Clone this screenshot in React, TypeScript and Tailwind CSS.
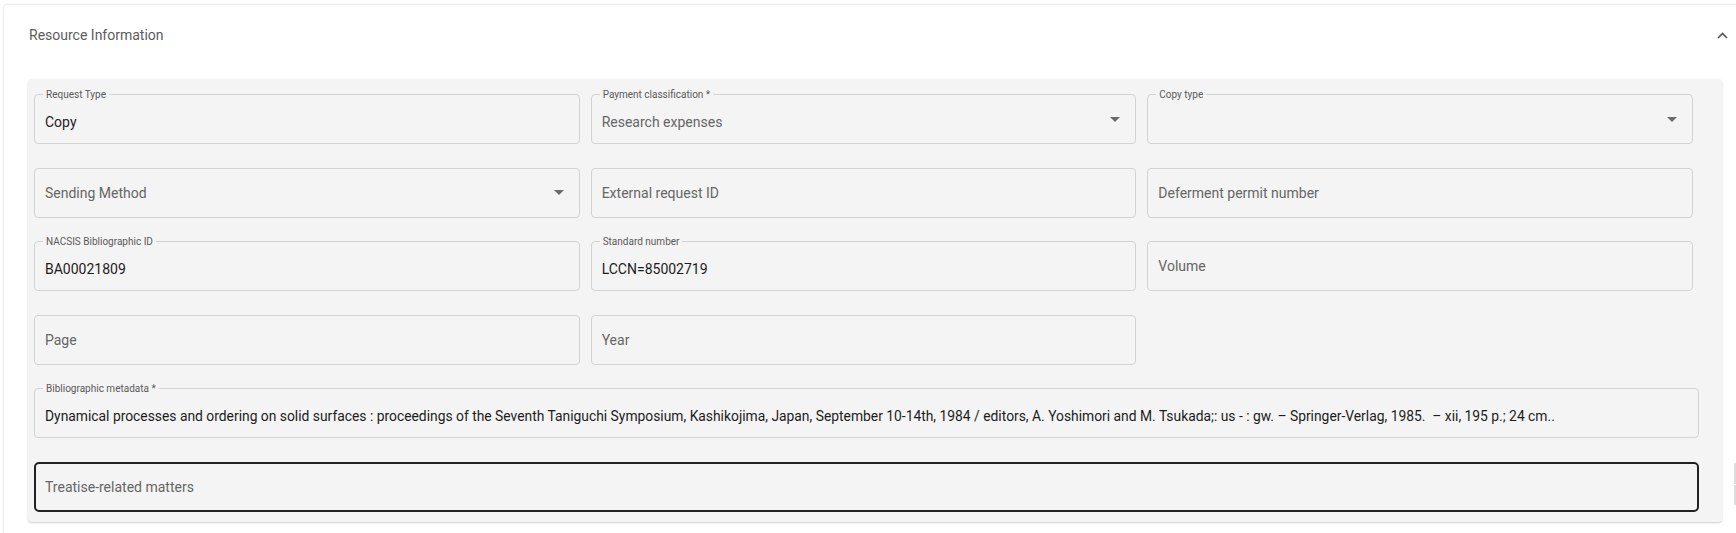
import type { ReactNode } from 'react'

type FieldProps = {
  label?: string
  value?: string
  placeholder?: string
  select?: boolean
  focused?: boolean
  muted?: boolean
  textClass?: string
}

function DropArrow() {
  return (
    <svg width="10" height="5" viewBox="0 0 10 5" className="shrink-0">
      <path d="M0 0h10L5 5z" fill="#6b6b6b" />
    </svg>
  )
}

function Field({ label, value, placeholder, select, focused, muted, textClass }: FieldProps) {
  const border = focused
    ? 'border-2 border-[#222] rounded-[5px] pl-[9px]'
    : 'border border-[#d3d3d3] rounded-[4px] pl-[10px]'
  return (
    <div className={`relative h-[50px] flex items-center pr-[15px] ${border}`}>
      {label && (
        <span className="absolute -top-[6px] left-[8px] px-[3px] bg-[#f4f4f4] text-[10px] leading-[12px] text-[#5a5a5a]">
          {label}
        </span>
      )}
      <div
        className={`flex-1 min-w-0 leading-[20px] whitespace-pre truncate ${textClass ?? 'text-[14px]'} ${
          label ? 'pt-[6px]' : ''
        }`}
      >
        {value ? (
          <span className={muted ? 'text-[#666]' : 'text-[#1c1c1c]'}>{value}</span>
        ) : (
          <span className="text-[#666]">{placeholder}</span>
        )}
      </div>
      {select && <DropArrow />}
    </div>
  )
}

function Row({ children }: { children: ReactNode }) {
  return <div className="grid grid-cols-3 gap-x-[11px] mr-[6px]">{children}</div>
}

const bibliographic =
  'Dynamical processes and ordering on solid surfaces : proceedings of the Seventh Taniguchi Symposium, Kashikojima, Japan, September 10-14th, 1984 / editors, A. Yoshimori and M. Tsukada;: us - : gw. \u2013 Springer-Verlag, 1985.  \u2013 xii, 195 p.; 24 cm..'

export default function App() {
  return (
    <div
      className="relative h-[533px] overflow-hidden bg-white pl-[4px] pt-[5px]"
      style={{ fontFamily: 'Roboto, "Liberation Sans", sans-serif' }}
    >
      <div className="w-[1740px] min-h-[540px] bg-white rounded-tl-[4px] shadow-[0_0_3px_rgba(0,0,0,0.18)]">
        <div className="flex items-center h-[60px] pl-[25px] pr-[8px]">
          <h2 className="flex-1 text-[14px] text-[#5c5c5c]">Resource Information</h2>
          <svg width="11" height="7" viewBox="0 0 11 7" className="mr-[8px]">
            <path d="M1 6l4.5-4.5L10 6" fill="none" stroke="#555" strokeWidth="1.6" />
          </svg>
        </div>
        <div className="ml-[24px] w-[1694px] mt-[14px] bg-[#f4f4f4] rounded-[4px] shadow-[0_1px_2px_rgba(0,0,0,0.2)] pl-[6px] pr-[23px] pt-[15px] pb-[10px] flex flex-col gap-[23.5px]">
          <Row>
            <Field label="Request Type" value="Copy" />
            <Field label="Payment classification *" value="Research expenses" muted select />
            <Field label="Copy type" select />
          </Row>
          <Row>
            <Field placeholder="Sending Method" select />
            <Field placeholder="External request ID" />
            <Field placeholder="Deferment permit number" />
          </Row>
          <Row>
            <Field label="NACSIS Bibliographic ID" value="BA00021809" />
            <Field label="Standard number" value="LCCN=85002719" />
            <Field placeholder="Volume" />
          </Row>
          <Row>
            <Field placeholder="Page" />
            <Field placeholder="Year" />
            <div />
          </Row>
          <Field label="Bibliographic metadata *" value={bibliographic} textClass="text-[13.85px]" />
          <Field placeholder="Treatise-related matters" focused />
        </div>
      </div>
      <div className="absolute right-0 top-[463px] w-[2px] h-[42px] flex flex-col gap-[1px]">
        <div className="flex-1 bg-[#dedede]" />
        <div className="flex-1 bg-[#dedede]" />
      </div>
    </div>
  )
}
